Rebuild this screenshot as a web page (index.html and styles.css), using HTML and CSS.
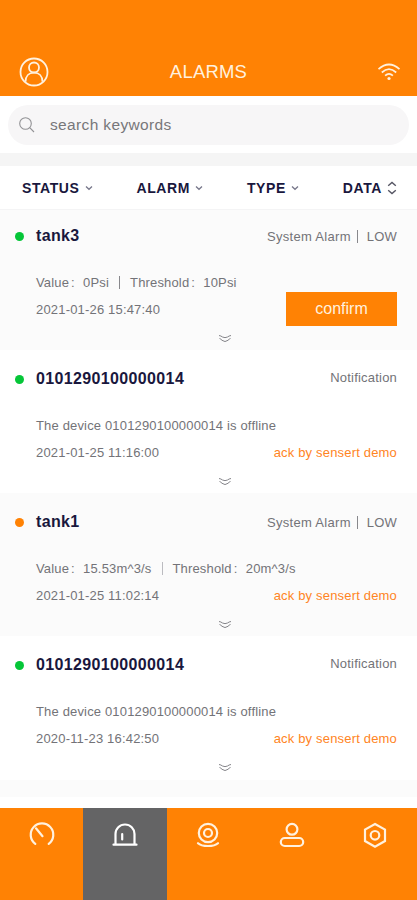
FILE: index.html
```html
<!DOCTYPE html>
<html lang="en">
<head>
<meta charset="utf-8">
<meta name="viewport" content="width=device-width, initial-scale=1">
<title>Alarms</title>
<link rel="stylesheet" href="styles.css">
</head>
<body>
<svg class="defs" width="0" height="0" aria-hidden="true">
  <symbol id="down" viewBox="0 0 8 6"><path d="M1 1.5 4 4.3 7 1.5"/></symbol>
  <symbol id="more" viewBox="0 0 14 9"><path d="M1 1.500Q3 1.800 4.500 3Q7 4.300 9.500 3Q11 1.800 13 1.500M1.500 4.500Q3 5 4 6.300Q7 8.800 10 6.300Q11 5 12.500 4.500"/></symbol>
</svg>
<div class="app">
  <header class="header">
    <svg class="avatar" viewBox="0 0 30 30"><circle cx="15" cy="15" r="13.500"/><circle cx="15" cy="10.500" r="5"/><path d="M6.500 24.800C6.500 19 10 15.600 15 15.600S23.500 19 23.500 24.800"/></svg>
    <h1 class="title">ALARMS</h1>
    <svg class="wifi" viewBox="0 0 24 18"><path d="M1.500 6.200Q12-3.200 22.500 6.200M4.800 9.500Q12 2.900 19.200 9.500M8.100 12.700Q12 9 15.900 12.700"/><circle cx="12" cy="15.500" r="1.600"/></svg>
  </header>
  <div class="search-wrap">
    <div class="search">
      <svg class="search-icon" viewBox="0 0 18 18"><circle cx="7.500" cy="7.500" r="5.800"/><path d="M11.700 11.700 16 16"/></svg>
      <span>search keywords</span>
    </div>
  </div>
  <nav class="filters">
    <div class="filter"><span>STATUS</span><svg class="down"><use href="#down"/></svg></div>
    <div class="filter"><span>ALARM</span><svg class="down"><use href="#down"/></svg></div>
    <div class="filter"><span>TYPE</span><svg class="down"><use href="#down"/></svg></div>
    <div class="filter"><span>DATA</span><svg class="sort" viewBox="0 0 10 14"><path d="M1.200 4.800 5 1.500 8.800 4.800M1.200 9.200 5 12.500 8.800 9.200"/></svg></div>
  </nav>
  <main class="list">
    <article class="card shaded first">
      <div class="row head"><i class="dot"></i><h2>tank3</h2><div class="kind"><span>System Alarm</span><b class="bar"></b><span>LOW</span></div></div>
      <div class="row detail"><span>Value</span><em>:</em><span>0Psi</span><b class="bar"></b><span>Threshold</span><em>:</em><span>10Psi</span></div>
      <div class="row foot"><time>2021-01-26 15:47:40</time><button class="confirm">confirm</button></div>
      <svg class="more"><use href="#more"/></svg>
    </article>
    <article class="card">
      <div class="row head"><i class="dot"></i><h2>0101290100000014</h2><div class="kind note">Notification</div></div>
      <div class="row detail">The device 0101290100000014 is offline</div>
      <div class="row foot"><time>2021-01-25 11:16:00</time><span class="ack">ack by sensert demo</span></div>
      <svg class="more"><use href="#more"/></svg>
    </article>
    <article class="card shaded">
      <div class="row head"><i class="dot orange"></i><h2>tank1</h2><div class="kind"><span>System Alarm</span><b class="bar"></b><span>LOW</span></div></div>
      <div class="row detail"><span>Value</span><em>:</em><span>15.53m^3/s</span><b class="bar light"></b><span>Threshold</span><em>:</em><span>20m^3/s</span></div>
      <div class="row foot"><time>2021-01-25 11:02:14</time><span class="ack">ack by sensert demo</span></div>
      <svg class="more"><use href="#more"/></svg>
    </article>
    <article class="card">
      <div class="row head"><i class="dot"></i><h2>0101290100000014</h2><div class="kind note">Notification</div></div>
      <div class="row detail">The device 0101290100000014 is offline</div>
      <div class="row foot"><time>2020-11-23 16:42:50</time><span class="ack">ack by sensert demo</span></div>
      <svg class="more"><use href="#more"/></svg>
    </article>
    <div class="peek"></div>
  </main>
  <nav class="tabs">
    <a class="tab"><svg viewBox="0 0 28 28"><path d="M7.300 22.800A11.300 11.300 0 1 1 20.700 22.800M8 7.300 14.500 15.200"/></svg></a>
    <a class="tab active"><svg viewBox="0 0 28 28"><path d="M4.500 23.200V13A9.500 9.500 0 0 1 23.500 13V23.200M2.500 23.700H25.500M11.200 13V18.500"/></svg></a>
    <a class="tab"><svg viewBox="0 0 28 28"><circle cx="14" cy="12" r="9.200"/><circle cx="14" cy="12" r="4"/><path d="M4 22.200Q7 25 14 25T24 22.200"/></svg></a>
    <a class="tab"><svg viewBox="0 0 28 28"><circle cx="14" cy="8.300" r="5.400"/><rect x="2.800" y="17" width="22.400" height="8" rx="4"/></svg></a>
    <a class="tab"><svg viewBox="0 0 28 28"><path d="M14 3 24 8.600V20L14 25.700 4 20V8.600Z"/><circle cx="14" cy="14.300" r="4.300"/></svg></a>
  </nav>
</div>
</body>
</html>
```
FILE: styles.css
```css
* { box-sizing: border-box; }
body { margin: 0; font-family: "Liberation Sans", Arial, sans-serif; background: #fff; color: #737378; }
h1, h2 { margin: 0; }
svg { fill: none; stroke: currentColor; flex: none; }
.defs { display: block; }
.app { width: 417px; height: 900px; display: flex; flex-direction: column; overflow: hidden; }

.header { height: 96px; flex: none; background: #ff8204; color: #fff1df; display: grid; grid-template-columns: 1fr auto 1fr; align-items: center; padding: 48px 16px 0; }
.avatar { width: 30px; height: 30px; stroke-width: 1.8; margin-left: 3px; }
.title { font-size: 18.500px; font-weight: 400; letter-spacing: .2px; line-height: 24px; }
.wifi { width: 24px; height: 18px; stroke-width: 1.7; justify-self: end; }
.wifi circle { fill: currentColor; stroke: none; }

.search-wrap { height: 57px; flex: none; padding: 9px 8px; }
.search { height: 40px; border-radius: 20px; background: #f7f6f7; display: flex; align-items: center; padding-left: 10px; gap: 14px; font-size: 15.500px; letter-spacing: .36px; color: #77777a; }
.search-icon { width: 18px; height: 18px; stroke: #929295; stroke-width: 1.1; }

.filters { height: 57px; flex: none; border-top: 13px solid #f5f5f5; border-bottom: 1px solid #f4f4f5; display: flex; justify-content: space-between; align-items: center; padding: 0 20px 0 22px; color: #19173d; font-size: 14px; font-weight: 700; letter-spacing: .6px; }
.filter { display: flex; align-items: center; gap: 5px; }
.down { width: 8px; height: 6px; stroke: #77778a; stroke-width: 1.3; }
.sort { width: 10px; height: 14px; stroke: #555563; stroke-width: 1.4; }

.list { flex: 1; min-height: 0; }
.card { height: 143.200px; padding: 19px 20px 0 36px; font-size: 13px; }
.first { height: 140px; padding-top: 16px; }
.shaded { background: #fbfbfb; }
.row { display: flex; align-items: center; }
.head { height: 20px; }
.dot { width: 9px; height: 9px; border-radius: 50%; background: #05c638; margin: 0 12px 0 -21px; }
.dot.orange { background: #ff8204; }
.head h2 { font-size: 16px; line-height: 20px; letter-spacing: .36px; color: #19173d; }
.kind { margin-left: auto; display: flex; align-items: center; letter-spacing: .2px; }
.kind .bar { margin: 0 9px 0 6px; }
.kind.note { padding-bottom: 4px; }
.bar { width: 1px; height: 13px; background: #88888c; }
.bar.light { background: #bbbbc0; }
.kind > span:first-child { letter-spacing: .3px; }
.detail { height: 20px; margin-top: 26px; letter-spacing: .16px; }
.detail em { font-style: normal; width: 14px; padding-left: 2px; }
.detail .bar { margin: 0 10px; }
.foot { height: 20px; margin-top: 7px; justify-content: space-between; }
time { letter-spacing: .18px; }
.ack { color: #ff8424; letter-spacing: .18px; }
.confirm { width: 111px; height: 34px; border: 0; background: #ff8204; color: #fff1df; font: 16px "Liberation Sans", Arial, sans-serif; padding: 0; }
.more { display: block; width: 14px; height: 9px; margin: 15px 0 0 182px; stroke: #85858a; stroke-width: 1; }
.peek { height: 17px; background: #fbfbfb; }

.tabs { height: 92px; flex: none; display: grid; grid-template-columns: repeat(5, 1fr); background: #ff8204; color: #fff1df; }
.tab { display: flex; justify-content: center; padding-top: 13px; }
.tab svg { width: 28px; height: 28px; stroke-width: 2.2; stroke-linecap: round; }
.active { background: #646465; color: #fff; }
```
